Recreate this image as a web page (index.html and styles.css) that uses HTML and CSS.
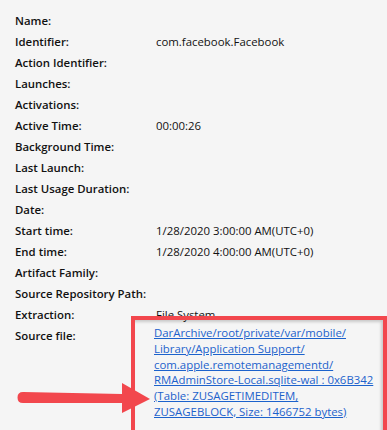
FILE: index.html
```html
<!DOCTYPE html>
<html>
<head>
<meta charset="utf-8">
<link rel="stylesheet" href="styles.css">
</head>
<body>
<div class="props">
  <div class="label">Name:</div><div class="value"></div>
  <div class="label">Identifier:</div><div class="value">com.facebook.Facebook</div>
  <div class="label">Action Identifier:</div><div class="value"></div>
  <div class="label">Launches:</div><div class="value"></div>
  <div class="label">Activations:</div><div class="value"></div>
  <div class="label">Active Time:</div><div class="value">00:00:26</div>
  <div class="label">Background Time:</div><div class="value"></div>
  <div class="label">Last Launch:</div><div class="value"></div>
  <div class="label">Last Usage Duration:</div><div class="value"></div>
  <div class="label">Date:</div><div class="value"></div>
  <div class="label">Start time:</div><div class="value">1/28/2020 3:00:00 AM(UTC+0)</div>
  <div class="label">End time:</div><div class="value">1/28/2020 4:00:00 AM(UTC+0)</div>
  <div class="label">Artifact Family:</div><div class="value"></div>
  <div class="label">Source Repository Path:</div><div class="value"></div>
  <div class="label">Extraction:</div><div class="value">File System</div>
  <div class="label">Source file:</div>
  <div class="value link-cell"><a class="link" href="#">DarArchive/root/private/var/mobile/<br>Library/Application Support/<br>com.apple.remotemanagementd/<br>RMAdminStore-Local.sqlite-wal : 0x6B342<br>(Table: ZUSAGETIMEDITEM,<br>ZUSAGEBLOCK, Size: 1466752 bytes)</a></div>
</div>
<div class="highlight"></div>
<svg class="arrow" width="160" height="50" viewBox="0 0 160 50">
  <path d="M23 9 L122 11 L122 0 L150 16 L122 30 L122 20 L23 20 Q17.5 20 17.5 14.5 Q17.5 9 23 9 Z" fill="#f2474d"/>
</svg>
</body>
</html>
```
FILE: styles.css
```css
html, body {
  margin: 0;
  padding: 0;
  background: #f5f5f5;
}
body {
  position: relative;
  width: 387px;
  height: 430px;
  overflow: hidden;
  font-family: "Open Sans", "Noto Sans", sans-serif;
  font-size: 11.4px;
  color: #111;
}
.props {
  display: grid;
  grid-template-columns: 141px 1fr;
  padding: 10px 0 0 15px;
}
.label {
  font-weight: 600;
  line-height: 21px;
  height: 21px;
  white-space: nowrap;
}
.value {
  line-height: 21px;
  min-height: 21px;
  white-space: nowrap;
}
.link-cell {
  line-height: 15.75px;
  margin-left: -2px;
}
.link {
  color: #1c62cc;
  text-decoration: underline;
}
.highlight {
  position: absolute;
  left: 131px;
  top: 316px;
  width: 256px;
  height: 120px;
  box-sizing: border-box;
  border: 4px solid #f2474d;
  box-shadow: inset -2px 2px 3px rgba(0, 0, 0, 0.18);
}
.arrow {
  position: absolute;
  left: 0;
  top: 383px;
}
```
